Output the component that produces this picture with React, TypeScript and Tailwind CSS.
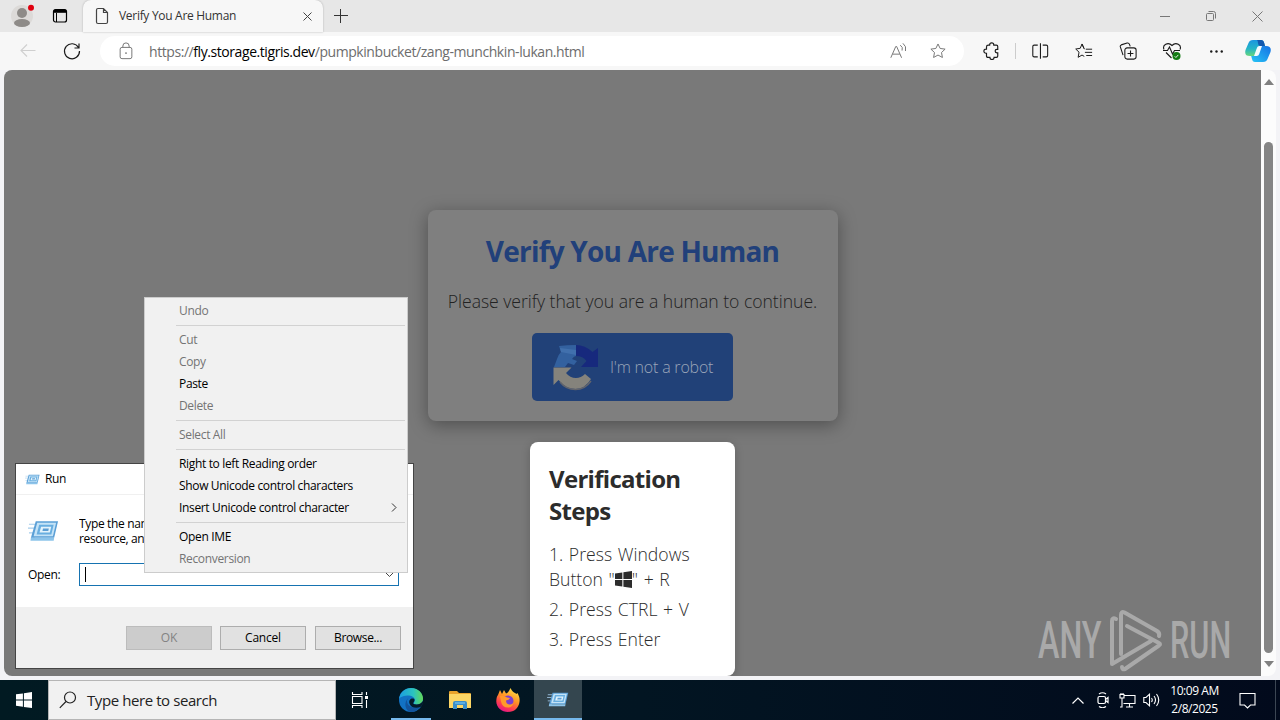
import type { ReactNode } from "react";

interface IconProps {
  children: ReactNode;
  size?: number;
  className?: string;
}

const Icon = ({ children, size = 20, className = "" }: IconProps) => (
  <svg
    width={size}
    height={size}
    viewBox="0 0 20 20"
    fill="none"
    stroke="currentColor"
    strokeWidth="1.1"
    className={`shrink-0 ${className}`}
  >
    {children}
  </svg>
);

const ToolButton = ({ children }: { children: ReactNode }) => (
  <div className="flex h-full w-11 items-center justify-center">{children}</div>
);

const RunIcon = ({ width, height }: { width: number; height: number }) => (
  <svg width={width} height={height} viewBox="0 0 32 22" className="shrink-0">
    <path d="M1 4h8M0 8h7M1 13h6M3 18h4" stroke="#a5cdec" strokeWidth="1.2" />
    <path d="M8 1h23l-4 17H3z" fill="#5a9fd6" />
    <path d="M3 18h24l-.5 3H2.5z" fill="#8cc4ea" />
    <path d="M9.500 2.500h19.500l-3.300 14H5.800z" fill="#c4e3f7" />
    <path d="M11.500 4.500h15l-2.400 10H8.900z" fill="#68aee0" />
    <path d="M13.500 6.500h10.500l-1.500 6H11.900z" fill="#e3f3fc" />
    <path d="M15.500 8.500h6l-.6 2.500h-6z" fill="#5c9ed3" />
  </svg>
);

const StarPath = "M10 2.200l2.400 5 5.500.7-4 3.800 1 5.500-4.900-2.700-4.900 2.700 1-5.500-4-3.800 5.500-.7z";

const TabStrip = () => (
  <div className="flex h-8 bg-[#e7e7e7]">
    <div className="flex w-[83px] items-center">
      <svg width="24" height="24" viewBox="0 0 24 24" className="ml-[10px]">
        <circle cx="12" cy="12" r="11" fill="#dcdad8" />
        <circle cx="12" cy="9" r="5" fill="#8e8b88" />
        <ellipse cx="12" cy="19" rx="8" ry="4" fill="#8e8b88" />
        <circle cx="21" cy="3.800" r="3" fill="#e0000f" />
      </svg>
      <svg width="16" height="16" viewBox="0 0 16 16" className="ml-[18px]" fill="none" stroke="#000">
        <rect x="1.500" y="1.500" width="13" height="12.500" rx="2" strokeWidth="1.200" />
        <path d="M2 3.300h12" strokeWidth="3" />
        <path d="M4.500 5v9" strokeWidth="1" />
      </svg>
    </div>
    <div className="flex w-[240px] items-center rounded-t-lg bg-[#f7f7f7] shadow-[0_0_2px_#aaa]">
      <svg width="14" height="18" viewBox="0 0 14 18" fill="none" stroke="#444" strokeWidth="1.200" className="ml-3">
        <path d="M3 1.500h5.500l4 4V15q0 1.500-1.500 1.500H3q-1.500 0-1.500-1.500V3Q1.500 1.500 3 1.500zM8.500 1.500V5.500h4" />
      </svg>
      <span className="ml-[10px] w-[184px] whitespace-nowrap text-[12px] tracking-[-0.3px] text-[#333]">
        Verify You Are Human
      </span>
      <svg width="9" height="9" viewBox="0 0 9 9" stroke="#444" strokeWidth="1">
        <path d="M.5.5l8 8M8.500.5l-8 8" />
      </svg>
    </div>
    <div className="flex w-9 items-center justify-center">
      <svg width="14" height="14" viewBox="0 0 14 14" stroke="#333" strokeWidth="1">
        <path d="M6.500 0v14M0 6.500h14" />
      </svg>
    </div>
    <div className="ml-auto flex text-[#777]">
      <div className="flex w-[46px] items-center justify-center">
        <svg width="10" height="10" stroke="currentColor"><path d="M0 5.500h10" /></svg>
      </div>
      <div className="flex w-[46px] items-center justify-center">
        <svg width="12" height="12" viewBox="0 0 12 12" fill="none" stroke="currentColor">
          <rect x="1.500" y="3.500" width="7" height="7" rx="1" />
          <path d="M3.500 1.500h5q2 0 2 2v5" />
        </svg>
      </div>
      <div className="flex w-[46px] items-center justify-center">
        <svg width="11" height="11" viewBox="0 0 11 11" stroke="currentColor"><path d="M.5.5l10 10M10.500.5l-10 10" /></svg>
      </div>
    </div>
  </div>
);

const Toolbar = () => (
  <div className="flex h-[38px] items-center bg-[#f7f7f7] pl-[6px] text-[#1b1b1b]">
    <ToolButton>
      <Icon className="text-[#cfcfcf]"><path d="M17.500 9.500H3M9 3.500l-6 6 6 6" /></Icon>
    </ToolButton>
    <ToolButton>
      <Icon><path d="M16.500 6.500A7.500 7.500 0 1 0 17.500 10M17 2.500v4.500h-4.500" strokeWidth="1.200" /></Icon>
    </ToolButton>
    <div className="ml-[6px] flex h-[30px] w-[864px] items-center rounded-full bg-white">
      <Icon size={18} className="ml-[17px] text-[#777]">
        <rect x="3.500" y="6" width="13" height="12.500" rx="2" />
        <path d="M6.500 6V4.500a3.500 3.500 0 0 1 7 0V6" />
        <circle cx="10" cy="12.300" r="1" fill="currentColor" stroke="none" />
      </Icon>
      <span className="ml-[14px] flex-1 whitespace-nowrap text-[14px] tracking-[-0.43px] text-[#6d6d6d]">
        https://<span className="text-black">fly.storage.tigris.dev</span>/pumpkinbucket/zang-munchkin-lukan.html
      </span>
      <Icon size={18} className="mr-[22px] text-[#777]">
        <path d="M2 17.500L7.500 5h1L14 17.500M4 13.500h8M12.500 3.500a5 5 0 0 1 2 6M15.500 1.500a8 8 0 0 1 2.800 8.500" />
      </Icon>
      <Icon size={18} className="mr-[17px] text-[#777]"><path d={StarPath} /></Icon>
    </div>
    <div className="ml-[5px] flex h-full items-center">
      <ToolButton>
        <Icon size={18}>
          <path d="M7 3.500h1.500V3.300a2.300 2.300 0 0 1 4.600 0v.2H16q1.500 0 1.500 1.500v3.200h-1a1.900 1.900 0 0 0 0 3.800h1v3.500q0 1.500-1.500 1.500h-2.600v.2a2.300 2.300 0 0 1-4.600 0V17H6.500Q5 17 5 15.500v-3h-.6a2.300 2.300 0 0 1 0-4.600H5V5.500q0-2 2-2z" strokeWidth="1.300" />
        </Icon>
      </ToolButton>
      <div className="mx-[2px] h-4 w-px bg-[#ccc]" />
      <ToolButton>
        <Icon size={18}>
          <path d="M10.500 1.500v17M7.500 3.500H3.500Q2 3.500 2 5v10q0 1.500 1.500 1.500h4M13 3.500h4Q18.500 3.500 18.500 5v10q0 1.500-1.500 1.500h-4" strokeWidth="1.200" />
        </Icon>
      </ToolButton>
      <ToolButton>
        <Icon size={18}>
          <path d="M10 7h-.2L7.800 2.200 5.800 7l-5 .8 3.700 3.500-1 5.700 4.300-2.500 2.500 1.500M12 8h7M11 11.500h8M12.500 15H19M7.800 2.200L10.500 8" />
        </Icon>
      </ToolButton>
      <ToolButton>
        <Icon size={18}>
          <rect x="6.500" y="6.500" width="12.500" height="12.500" rx="2.500" strokeWidth="1.200" />
          <path d="M12.800 9.500v6.500M9.500 12.800h6.500M4.500 14.500L1.500 5.500Q1 3.800 2.500 3.200L9 1.200q1.800-.5 2.500 1.200l1 2.500" strokeWidth="1.200" />
        </Icon>
      </ToolButton>
      <ToolButton>
        <Icon size={20}>
          <path d="M9.500 17L4 11.500M2 8.500C0 4 6 .5 10 4.500 14 .5 20 4 18 8.500M1 9.500h4.500l2-3.500 3 7 2-3.500H18" strokeWidth="1.100" />
          <circle cx="14.500" cy="15" r="4" fill="#137b13" stroke="none" />
          <path d="M12.700 15.300l1.200 1.200 2.400-2.600" stroke="#fff" strokeWidth=".9" />
        </Icon>
      </ToolButton>
      <ToolButton>
        <Icon size={15}>
          <g fill="currentColor" stroke="none">
            <circle cx="3" cy="10" r="1.600" />
            <circle cx="10" cy="10" r="1.600" />
            <circle cx="17" cy="10" r="1.600" />
          </g>
        </Icon>
      </ToolButton>
      <svg width="26" height="24" viewBox="0 0 26 24" className="ml-[7px]">
        <defs>
          <linearGradient id="cpA" x1="0" y1="0" x2="0" y2="1">
            <stop offset="0" stopColor="#1a95e0" />
            <stop offset=".55" stopColor="#25b5c6" />
            <stop offset="1" stopColor="#67d67c" />
          </linearGradient>
          <linearGradient id="cpB" x1="0" y1="1" x2="1" y2="0">
            <stop offset="0" stopColor="#27c5f5" />
            <stop offset="1" stopColor="#1671e4" />
          </linearGradient>
        </defs>
        <path d="M8 1h8q2.500 0 3.200 3l.8 3h-5l-4 10H5q-6 0-4.500-6L3.500 4Q4.500 1 8 1z" fill="url(#cpA)" />
        <path d="M12 1h4q2.500 0 3.200 3l.8 3h-5q-2-.5-2-3 0-2-1-3z" fill="#1358ae" />
        <path d="M18 23h-8q-2.500 0-3-3l-.8-3H11l4-10h6q6 0 4.500 6l-3 7Q21.500 23 18 23z" fill="url(#cpB)" />
        <path d="M14 7h3l-2.800 8q-.6 2-2.500 2H9l2.500-7q.8-3 2.500-3z" fill="#f5fbff" />
      </svg>
    </div>
  </div>
);

const RecaptchaLogo = () => (
  <svg width="48" height="48" viewBox="0 0 48 48">
    <path d="M24 2q9 0 16.500 7l5.500-4v19H29l5.500-6Q31 13 24 13z" fill="#17297d" />
    <path d="M24 2v11q-2 0-4 3l5 2-3 4-6-2-3 4H2l3-8q1-4 4-7L7 3q8-1 17-1z" fill="#33619f" />
    <path d="M8 5l16 2v5L9 9z" fill="#4170ad" />
    <path d="M1.500 24.500h18l-5.500 5.500q4 5 10 5 5 0 9-4l6 5q-6 10-15.500 10-10 0-17-9l-5 5z" fill="#85837c" />
    <path d="M8 39q6 7.500 15.500 7.500T39 38" stroke="#62646c" strokeWidth="1.500" fill="none" />
  </svg>
);

const VerifyCard = () => (
  <section className="flex h-[211px] w-[410px] flex-col items-center rounded-lg bg-[#7f7f7f] shadow-[0_4px_18px_rgba(0,0,0,0.35)]">
    <h1 className="mt-[21px] h-10 whitespace-nowrap text-[28px] leading-10 font-bold tracking-[-0.78px] text-[#21407a]">
      Verify You Are Human
    </h1>
    <p className="mt-[18px] h-6 whitespace-nowrap text-[17.6px] leading-6 font-light tracking-[-0.03px] text-[#222]">
      Please verify that you are a human to continue.
    </p>
    <div className="mt-5 flex h-[68px] w-[201px] items-center rounded-[5px] bg-[#214178] pl-5">
      <RecaptchaLogo />
      <span className="ml-[10px] whitespace-nowrap text-[16px] font-light tracking-[-0.2px] text-[#9aa5b8]">
        I'm not a robot
      </span>
    </div>
  </section>
);

const WindowsGlyph = ({ size }: { size: number }) => (
  <svg width={size} height={size} viewBox="0 0 16 16" fill="currentColor" className="inline-block">
    <path d="M0 2.300l6.900-.9v6.100H0zM7.900 1.200L16 0v7.500H7.900zM0 8.500h6.900v6.200L0 13.700zM7.900 8.500H16V16l-8.100-1.100z" />
  </svg>
);

const StepsCard = () => (
  <section className="mt-[21px] h-[234px] w-[205px] rounded-lg bg-white pt-[21px] pl-[19px] whitespace-nowrap text-[#2c2c2c] shadow-[0_2px_10px_rgba(0,0,0,0.2)]">
    <h2 className="text-[24px] leading-8 font-bold tracking-[-0.7px]">
      Verification
      <br />
      Steps
    </h2>
    <ol className="mt-[15px] text-[17.6px] leading-[25px] font-light tracking-[0.02px] [word-spacing:1px]">
      <li className="mb-[5px]">
        1. Press Windows
        <br />
        Button "<span className="relative -top-[2px]"><WindowsGlyph size={17} /></span>" + R
      </li>
      <li className="mb-[5px]">2. Press CTRL + V</li>
      <li>3. Press Enter</li>
    </ol>
  </section>
);

const Watermark = () => (
  <div className="absolute top-[539px] left-[1034px] flex h-16 w-[196px] items-center font-[Roboto] text-[52px] leading-[64px] font-medium text-[#a9a9a9]">
    <span className="w-[70px] origin-left scale-x-[0.62]">ANY</span>
    <svg width="56" height="64" viewBox="0 0 56 64" fill="none" stroke="#a9a9a9" strokeWidth="4" strokeLinejoin="round" strokeLinecap="round" className="shrink-0">
      <path d="M8 10q-4-2-4 2v43l39-23M13 45V6q0-4 3.500-2.500L49 22q3 2 2 5M19 17l32 17q2 1 0 2.500L17 60q-3 1-3-2" />
    </svg>
    <span className="ml-[6px] w-[62px] origin-left scale-x-[0.59]">RUN</span>
  </div>
);

const PageView = () => (
  <div className="flex h-[610px] bg-[#f3f3f6] pl-1">
    <main className="relative flex h-[606px] w-[1257px] flex-col items-center overflow-hidden rounded-tl-lg rounded-b-lg rounded-br-none bg-[#797979] pt-[140px]">
      <VerifyCard />
      <StepsCard />
      <Watermark />
    </main>
    <div className="flex h-[606px] w-[15px] flex-col items-center rounded-r-lg bg-[#fcfcfc]">
      <svg width="10" height="6" viewBox="0 0 10 6" fill="#808080" className="mt-[9px]"><path d="M5 0l5 6H0z" /></svg>
      <div className="mt-[57px] h-[511px] w-[9px] rounded-full bg-[#858585]" />
      <svg width="10" height="6" viewBox="0 0 10 6" fill="#808080" className="mt-[8px]"><path d="M5 6L0 0h10z" /></svg>
    </div>
  </div>
);

const RunDialog = () => (
  <div className="absolute top-[463px] left-[15px] flex h-[206px] w-[399px] flex-col border border-[#444] bg-white text-[12px] text-black">
    <div className="flex h-[31px] items-center border-b border-[#f0f0f0] pl-[9px]">
      <RunIcon width={15} height={11} />
      <span className="ml-[5px] tracking-[-0.4px]">Run</span>
    </div>
    <div className="h-[112px]">
      <div className="flex h-[68px] items-center pl-3 pt-[3px]">
        <RunIcon width={31} height={22} />
        <p className="ml-5 w-[65px] overflow-hidden leading-[15px] tracking-[-0.35px] whitespace-nowrap">
          Type the nam
          <br />
          resource, an
        </p>
      </div>
      <div className="flex h-[23px] items-center pl-3">
        <span className="w-[51px] tracking-[-0.3px]">Open:</span>
        <div className="flex h-[23px] w-[320px] items-center justify-between border border-[#1673b1] pl-[5px] pr-1">
          <span className="h-[15px] w-px bg-black" />
          <svg width="9" height="6" viewBox="0 0 9 6" fill="none" stroke="#444"><path d="M.5.5l4 4 4-4" /></svg>
        </div>
      </div>
    </div>
    <div className="flex flex-1 items-start justify-end bg-[#f0f0f0] pt-[19px] pr-3">
      <div className="flex h-6 w-[86px] items-center justify-center border border-[#bcbcbc] bg-[#ccc] text-[#838383]">OK</div>
      <div className="ml-2 flex h-6 w-[86px] items-center justify-center border border-[#adadad] bg-[#e1e1e1] tracking-[-0.2px]">Cancel</div>
      <div className="ml-[9px] flex h-6 w-[86px] items-center justify-center border border-[#adadad] bg-[#e1e1e1] tracking-[-0.35px]">Browse...</div>
    </div>
  </div>
);

interface MenuItem {
  label: string;
  enabled?: boolean;
  submenu?: boolean;
}

const menuGroups: MenuItem[][] = [
  [{ label: "Undo" }],
  [{ label: "Cut" }, { label: "Copy" }, { label: "Paste", enabled: true }, { label: "Delete" }],
  [{ label: "Select All" }],
  [
    { label: "Right to left Reading order", enabled: true },
    { label: "Show Unicode control characters", enabled: true },
    { label: "Insert Unicode control character", enabled: true, submenu: true },
  ],
  [{ label: "Open IME", enabled: true }, { label: "Reconversion" }],
];

const ContextMenu = () => (
  <div className="absolute top-[297px] left-[144px] h-[276px] w-[264px] border border-[#ccc] bg-[#f1f1f1] py-[2px] pl-[31px] pr-[2px] text-[12px]">
    {menuGroups.map((group, index) => (
      <div key={group[0].label}>
        {index > 0 && <div className="mt-[3px] mb-[3px] h-px bg-[#d2d2d2]" />}
        {group.map((item) => (
          <div
            key={item.label}
            className={`flex h-[22px] items-center justify-between pl-[3px] pr-[8px] tracking-[-0.34px] whitespace-nowrap ${
              item.enabled ? "text-black" : "text-[#747474]"
            }`}
          >
            {item.label}
            {item.submenu && (
              <svg width="6" height="9" viewBox="0 0 6 9" fill="none" stroke="#333" className="mb-[2px]"><path d="M1 .5l4 4-4 4" /></svg>
            )}
          </div>
        ))}
      </div>
    ))}
  </div>
);

const EdgeLogo = () => (
  <svg width="24" height="24" viewBox="0 0 24 24">
    <defs>
      <linearGradient id="edA" x1="0" y1=".4" x2="1" y2=".4">
        <stop offset="0" stopColor="#1b9de2" />
        <stop offset=".6" stopColor="#2bc3bf" />
        <stop offset="1" stopColor="#63d957" />
      </linearGradient>
    </defs>
    <circle cx="12" cy="12" r="12" fill="#1272c4" />
    <path d="M0 11C1 4 6 0 12 0c8 0 12 6 12 10.500 0 4-3 6-6 6-2.500 0-4-1-3-2 3-3-1-7-5-7C5 7.500 1 9 0 11z" fill="url(#edA)" />
    <path d="M8 13c0 5 5 8 13.500 5.500C19 22 16 24 12 24 6 23 4 14 10 9.500 8.500 11 8 12 8 13z" fill="#12549d" />
    <path d="M14.500 14.500c-1 1 .5 2 3 2 2 0 5-1 6.500-3.500v2c-.5 2-1.500 3-2.500 4-5 1.500-10 .5-11-3.500-1-3 1-5 3-5 2.500 0 2.500 2 1 4z" fill="#041b2a" />
  </svg>
);

const FolderLogo = () => (
  <svg width="22" height="20" viewBox="0 0 22 20">
    <path d="M0 2q0-1 1-1h7l2 2h11q1 0 1 1v14H0z" fill="#e9a32b" />
    <path d="M0 4h22v14H0z" fill="#fcd665" />
    <path d="M4 19v-6q0-2 2-2h10q2 0 2 2v6h-4v-4H8v4z" fill="#3a8ec9" />
    <path d="M6 13h10" stroke="#69b9ea" strokeWidth="1.500" />
  </svg>
);

const FirefoxLogo = () => (
  <svg width="24" height="24" viewBox="0 0 24 24">
    <defs>
      <linearGradient id="ffA" x1=".8" y1="0" x2=".3" y2="1">
        <stop offset="0" stopColor="#ffe54a" />
        <stop offset=".45" stopColor="#ff9324" />
        <stop offset=".75" stopColor="#ff3d50" />
        <stop offset="1" stopColor="#e31587" />
      </linearGradient>
    </defs>
    <path d="M2 7l2-5 2 4 2-4 2 3.500C12 5 13 3 14.500 0c1.500 4 5 5 6 6l1-1c1.500 3 2.500 5 2 9-1 6-5 10-11.500 10S0 19 .3 13C.4 10 1 8 2 7z" fill="url(#ffA)" />
    <circle cx="12" cy="13" r="5.500" fill="#7c3fd0" />
    <path d="M4 8q4-1 7 1.500l3 .5q-1 2-4 2.500 0 4 4 4 3 0 4-3-1 6-6 6-6 0-7-6z" fill="#ff9a2b" />
  </svg>
);

const Taskbar = () => (
  <footer className="flex h-10 items-center bg-gradient-to-r from-[#011a22] via-[#021522] to-[#020a1c] text-white">
    <div className="flex w-12 justify-center"><WindowsGlyph size={16} /></div>
    <div className="flex h-10 w-72 items-center border border-[#b5b5b5] bg-[#f1f1f1] text-[#222]">
      <svg width="18" height="18" viewBox="0 0 18 18" fill="none" stroke="#222" strokeWidth="1.200" className="ml-[10px]">
        <circle cx="11" cy="6.500" r="5.500" />
        <path d="M7 10.500L.8 16.800" />
      </svg>
      <span className="ml-[10px] text-[15px] tracking-[-0.42px] whitespace-nowrap">Type here to search</span>
    </div>
    <div className="flex h-10 w-[48px] items-center justify-center">
      <svg width="18" height="16" viewBox="0 0 18 16" fill="none" stroke="#fff" strokeWidth="1.100">
        <path d="M1.500 0v2.500h9.500V0M1.500 16v-2.500h9.500V16M1.500 4.500h9.500v7H1.500zM15.500 0v3M15.500 8v8" />
        <path d="M14 4h3v3h-3z" fill="#fff" stroke="none" />
      </svg>
    </div>
    <div className="flex h-10 w-[54px] items-center justify-center">
      <div className="flex h-full w-10 items-center justify-center border-b-2 border-[#76b9ed] pt-[2px]"><EdgeLogo /></div>
    </div>
    <div className="flex w-[44px] justify-center"><FolderLogo /></div>
    <div className="flex w-[52px] justify-center"><FirefoxLogo /></div>
    <div className="flex h-10 w-12 items-center justify-center border-b-2 border-[#76b9ed] bg-[#34464f]">
      <RunIcon width={22} height={15} />
    </div>
    <div className="ml-auto flex h-10 items-center">
      <svg width="12" height="7" viewBox="0 0 12 7" fill="none" stroke="#fff" strokeWidth="1.200" className="mr-3"><path d="M.5 6.500L6 1l5.500 5.500" /></svg>
      <svg width="14" height="16" viewBox="0 0 14 16" fill="none" stroke="#fff" strokeWidth="1.200" className="mr-[9px]">
        <rect x="2" y="4.500" width="7.500" height="7" rx="1.500" />
        <path d="M9.500 7.500l2.500-2v5l-2.500-2M3 2Q6.500-.5 10 2M3 14.500q3.500 2.500 7 0" />
      </svg>
      <svg width="17" height="15" viewBox="0 0 17 15" fill="none" stroke="#fff" strokeWidth="1.100" className="mr-[7px]">
        <path d="M5 2.500h11v8H4.500M10.500 10.500v3.500M7 14h7M1 1.500h4v3.500H1zM3 5v9H1M2 1.500V0M4 1.500V0" />
      </svg>
      <svg width="17" height="14" viewBox="0 0 17 14" fill="none" stroke="#fff" strokeWidth="1.100" className="mr-[10px]">
        <path d="M.8 4.500H3l3.500-3.300v11.600L3 9.500H.8zM8.500 5q1.500 2 0 4M11 3q3 4 0 8M13.500 1q4.500 6 0 12" />
      </svg>
      <div className="flex w-[49px] flex-col items-center text-[12px] leading-[18px] tracking-[-0.45px] whitespace-nowrap">
        <span>10:09 AM</span>
        <span>2/8/2025</span>
      </div>
      <svg width="17" height="17" viewBox="0 0 17 17" fill="none" stroke="#fff" strokeWidth="1.100" className="ml-[20px]">
        <path d="M1 1.500h15v11.500h-4.500L8.500 16l-3-3H1z" />
      </svg>
      <div className="ml-[19px] mr-1 h-10 w-px bg-[#3c4653]" />
    </div>
  </footer>
);

const App = () => {
  return (
    <div className="relative h-[720px] w-[1280px] overflow-hidden font-['Open_Sans',sans-serif]">
      <TabStrip />
      <Toolbar />
      <PageView />
      <Taskbar />
      <RunDialog />
      <ContextMenu />
    </div>
  );
};

export default App;
